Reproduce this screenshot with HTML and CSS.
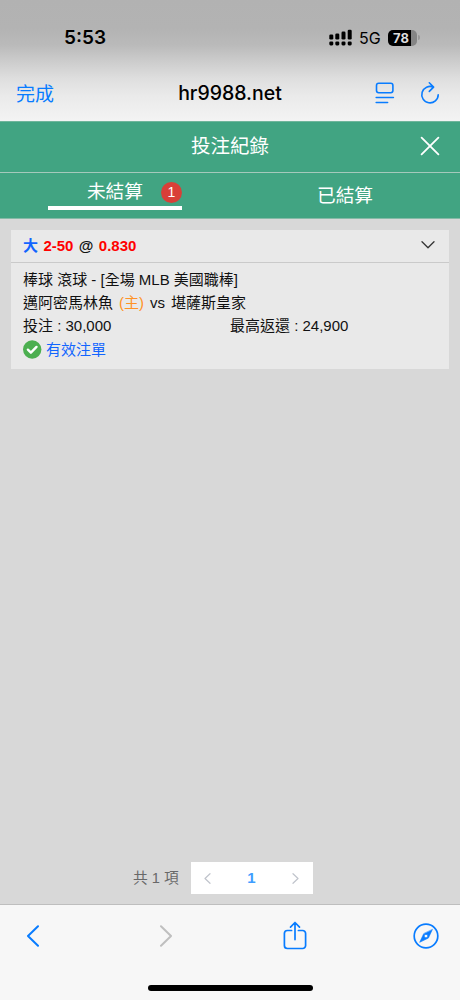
FILE: index.html
```html
<!DOCTYPE html>
<html lang="zh-Hant">
<head>
<meta charset="utf-8">
<meta name="viewport" content="width=device-width, initial-scale=1">
<title>投注紀錄</title>
<link rel="stylesheet" href="styles.css">
</head>
<body>
<div class="screen">
  <header class="browser-top">
    <div class="status">
      <span class="clock">5:53</span>
      <div class="status-right">
        <svg class="signal" width="24" height="18" viewBox="0 0 24 18">
          <rect x="0.3" y="5.5" width="4" height="5" rx="1.3"/><rect x="6.3" y="4.5" width="4" height="6" rx="1.3"/><rect x="12.5" y="2.6" width="4" height="7.9" rx="1.3"/><rect x="18.7" y="0.8" width="4" height="9.7" rx="1.3"/>
          <rect x="0.3" y="12.4" width="4" height="4" rx="1.3"/><rect x="6.3" y="12.4" width="4" height="4" rx="1.3"/><rect x="12.5" y="12.4" width="4" height="4" rx="1.3"/><rect x="18.7" y="12.4" width="4" height="4" rx="1.3"/>
        </svg>
        <span class="network">5G</span>
        <span class="battery"><span class="level">78</span></span>
        <span class="battery-tip"></span>
      </div>
    </div>
    <div class="address">
      <span class="done">完成</span>
      <span class="host">hr9988.net</span>
      <div class="address-icons">
        <svg width="20" height="22" viewBox="0 0 20 22">
          <rect x="1.5" y="1.2" width="16.4" height="9.6" rx="2.2"/><path d="M1.2 15.5h17.2M1.2 20.5h11.4"/>
        </svg>
        <svg width="20" height="24" viewBox="0 0 20 24">
          <path d="M13.4 6.2A8.2 8.2 0 1 0 18.2 13.7M9.3 1.8l4.3 4.3-4.3 4.3"/>
        </svg>
      </div>
    </div>
  </header>

  <div class="title-bar">
    <h1>投注紀錄</h1>
    <svg class="close" width="20" height="20" viewBox="0 0 20 20"><path d="M1.6 1.6l16.8 16.8M18.4 1.6L1.6 18.4"/></svg>
  </div>
  <nav class="tabs">
    <div class="tab">
      <div class="tab-active"><span>未結算</span><span class="badge">1</span></div>
    </div>
    <div class="tab">已結算</div>
  </nav>

  <main class="content">
    <article class="bet">
      <div class="bet-head">
        <div class="odds"><span class="pick">大</span><span class="red">2-50</span><span>@</span><span class="red">0.830</span></div>
        <svg width="14" height="8" viewBox="0 0 14 8"><path d="M1 .8l6 6 6-6"/></svg>
      </div>
      <div class="bet-body">
        <p class="league">棒球 滾球 - [全場 MLB 美國職棒]</p>
        <p class="match"><span>邁阿密馬林魚</span><span class="home">(主)</span><span>vs</span><span>堪薩斯皇家</span></p>
        <div class="amounts"><span>投注 : 30,000</span><span>最高返還 : 24,900</span></div>
        <div class="valid">
          <svg width="19" height="19" viewBox="0 0 19 19"><circle cx="9.2" cy="9.5" r="9.2"/><path d="M4.9 9.7l3 3 5.6-5.8"/></svg>
          <span>有效注單</span>
        </div>
      </div>
    </article>
    <div class="pagination">
      <span class="total">共 1 項</span>
      <div class="pager">
        <svg width="7" height="11" viewBox="0 0 7 11"><path d="M6 .7L1 5.5l5 4.8"/></svg>
        <span class="page">1</span>
        <svg width="7" height="11" viewBox="0 0 7 11"><path d="M1 .7l5 4.8-5 4.8"/></svg>
      </div>
    </div>
  </main>

  <footer class="browser-bottom">
    <div class="toolbar">
      <svg width="14" height="22" viewBox="0 0 14 22"><path d="M12 1.2L2 11l10 9.8"/></svg>
      <svg class="disabled" width="14" height="22" viewBox="0 0 14 22"><path d="M2 1.2L12 11 2 20.8"/></svg>
      <svg class="share" width="24" height="29" viewBox="0 0 24 29"><path class="thin" d="M8.6 9.5H4.4a3 3 0 0 0-3 3v12a3 3 0 0 0 3 3h15.2a3 3 0 0 0 3-3v-12a3 3 0 0 0-3-3h-4.2M12 18.6V1.7M7.5 6.1L12 1.5l4.5 4.6"/></svg>
      <svg class="compass" width="26" height="26" viewBox="0 0 26 26"><circle cx="13" cy="13" r="11.8"/><path class="needle" fill-rule="evenodd" d="M19.3 6.7L15.4 15.1 6.7 19.3 10.6 10.9zM13 11.2a1.8 1.8 0 1 0 0 3.6 1.8 1.8 0 0 0 0-3.6z"/></svg>
    </div>
    <div class="home-bar"></div>
  </footer>
</div>
</body>
</html>
```

FILE: styles.css
```css
* { box-sizing: border-box; }
body, h1, p { margin: 0; }
body { font-family: "Liberation Sans", "Noto Sans CJK TC", sans-serif; color: #111; }
svg { display: block; fill: none; stroke-linecap: round; stroke-linejoin: round; flex: none; }
.screen { width: 460px; height: 1000px; display: flex; flex-direction: column; overflow: hidden; background: #d8d8d8; }

.browser-top { height: 121px; background: linear-gradient(#b2b2b2 0, #b3b3b3 28px, #bababa 45px, #cdcdcd 62px, #dedede 78px, #eaeaea 96px, #f3f3f3 120px); color: #000; font-family: Inter, "Noto Sans CJK TC", sans-serif; }
.status { height: 65px; padding: 10px 40px 0 64px; display: flex; align-items: center; justify-content: space-between; }
.clock { font-size: 19px; font-weight: 600; }
.status-right { display: flex; align-items: center; }
.signal { fill: #000; }
.network { font-size: 16px; margin-left: 6px; width: 29px; }
.battery { width: 29px; height: 16px; border-radius: 5px; overflow: hidden; background: linear-gradient(90deg, #000 23px, #858585 23px); }
.level { display: block; color: #ddd; font-size: 13px; line-height: 16px; font-weight: 700; padding-left: 5px; }
.battery-tip { width: 2px; height: 5px; margin-left: 1px; border-radius: 0 2px 2px 0; background: #999; }
.address { height: 56px; padding: 0 20px 0 16px; display: grid; grid-template-columns: 90px 1fr 86px; align-items: center; }
.done { color: #087cff; font-size: 19px; padding-bottom: 2px; }
.host { justify-self: center; font-size: 19.5px; font-weight: 500; }
.address-icons { display: flex; align-items: center; justify-content: flex-end; gap: 25px; }
.address-icons svg { stroke: #087cff; stroke-width: 1.6; }

.title-bar { height: 52px; padding: 0 20px 2px; display: grid; grid-template-columns: 20px 1fr 20px; align-items: center; background: #41a482; border-top: 1px solid #6fb59b; border-bottom: 1px solid #a5c9bc; color: #fff; }
.title-bar h1 { grid-column: 2; text-align: center; font-size: 19.5px; line-height: 28px; font-weight: 400; }
.close { stroke: #fff; stroke-width: 1.8; }
.tabs { height: 46px; display: grid; grid-template-columns: 1fr 1fr; background: #41a482; border-bottom: 1px solid #86baa7; color: #fff; font-size: 18.7px; }
.tab { display: flex; align-items: center; justify-content: center; padding-bottom: 4px; }
.tab-active { width: 134px; height: 37px; align-self: flex-start; border-bottom: 4px solid #fff; padding-top: 3px; display: flex; align-items: center; justify-content: flex-end; gap: 18px; }
.tab-active > span:first-child { margin-top: -3px; }
.badge { width: 21px; height: 21px; margin-top: 2px; border-radius: 50%; background: #d93f38; font-size: 14px; line-height: 21px; text-align: center; }

.content { flex: 1; padding: 11px 11px 10px; display: flex; flex-direction: column; justify-content: space-between; border-bottom: 1px solid #bebebe; }
.bet { height: 139px; background: #e9e9e9; font-size: 15px; }
.bet-head { height: 33px; padding: 0 14px 0 12px; border-bottom: 1px solid #cacaca; display: flex; align-items: center; justify-content: space-between; }
.bet-head svg { stroke: #333; stroke-width: 1.3; margin-top: -3px; }
.odds { display: flex; gap: 5.4px; font-weight: 700; line-height: 22px; }
.pick { color: #1265ff; }
.red { color: #f00; }
.bet-body { padding: 5px 12px 0; line-height: 23px; }
.match { display: flex; gap: 6px; }
.home { color: #ff9226; }
.amounts { display: grid; grid-template-columns: 207px 1fr; }
.valid { display: flex; align-items: center; gap: 4px; height: 25px; color: #1265ff; }
.valid circle { fill: #4caf50; }
.valid path { stroke: #fff; stroke-width: 2.4; }
.pagination { display: flex; align-items: center; padding-left: 122px; font-size: 15px; }
.total { width: 58px; padding-bottom: 3px; color: #686868; font-size: 14.7px; white-space: nowrap; }
.pager { width: 122px; height: 32px; padding: 0 14px 0 13px; background: #fff; display: flex; align-items: center; justify-content: space-between; }
.pager svg { stroke: #c0c4cc; stroke-width: 1.2; }
.page { color: #409eff; font-family: "Liberation Sans", sans-serif; font-size: 15px; font-weight: 700; line-height: 17px; padding-bottom: 2px; }

.browser-bottom { height: 95px; background: #f7f7f7; display: flex; flex-direction: column; align-items: center; }
.toolbar { width: 100%; height: 62px; padding: 0 21px 0 26px; display: flex; align-items: center; }
.toolbar svg { stroke: #087cff; stroke-width: 2; }
.toolbar .disabled { stroke: #bfbfbf; margin-left: 119px; }
.share { margin-left: 110px; margin-top: -2px; }
.compass { margin-left: auto; }
.toolbar .thin, .toolbar circle { stroke-width: 1.7; }
.toolbar .needle { fill: #087cff; stroke: #087cff; stroke-width: .6; }
.home-bar { width: 165px; height: 6px; margin-top: 18px; border-radius: 3px; background: #000; }
```
